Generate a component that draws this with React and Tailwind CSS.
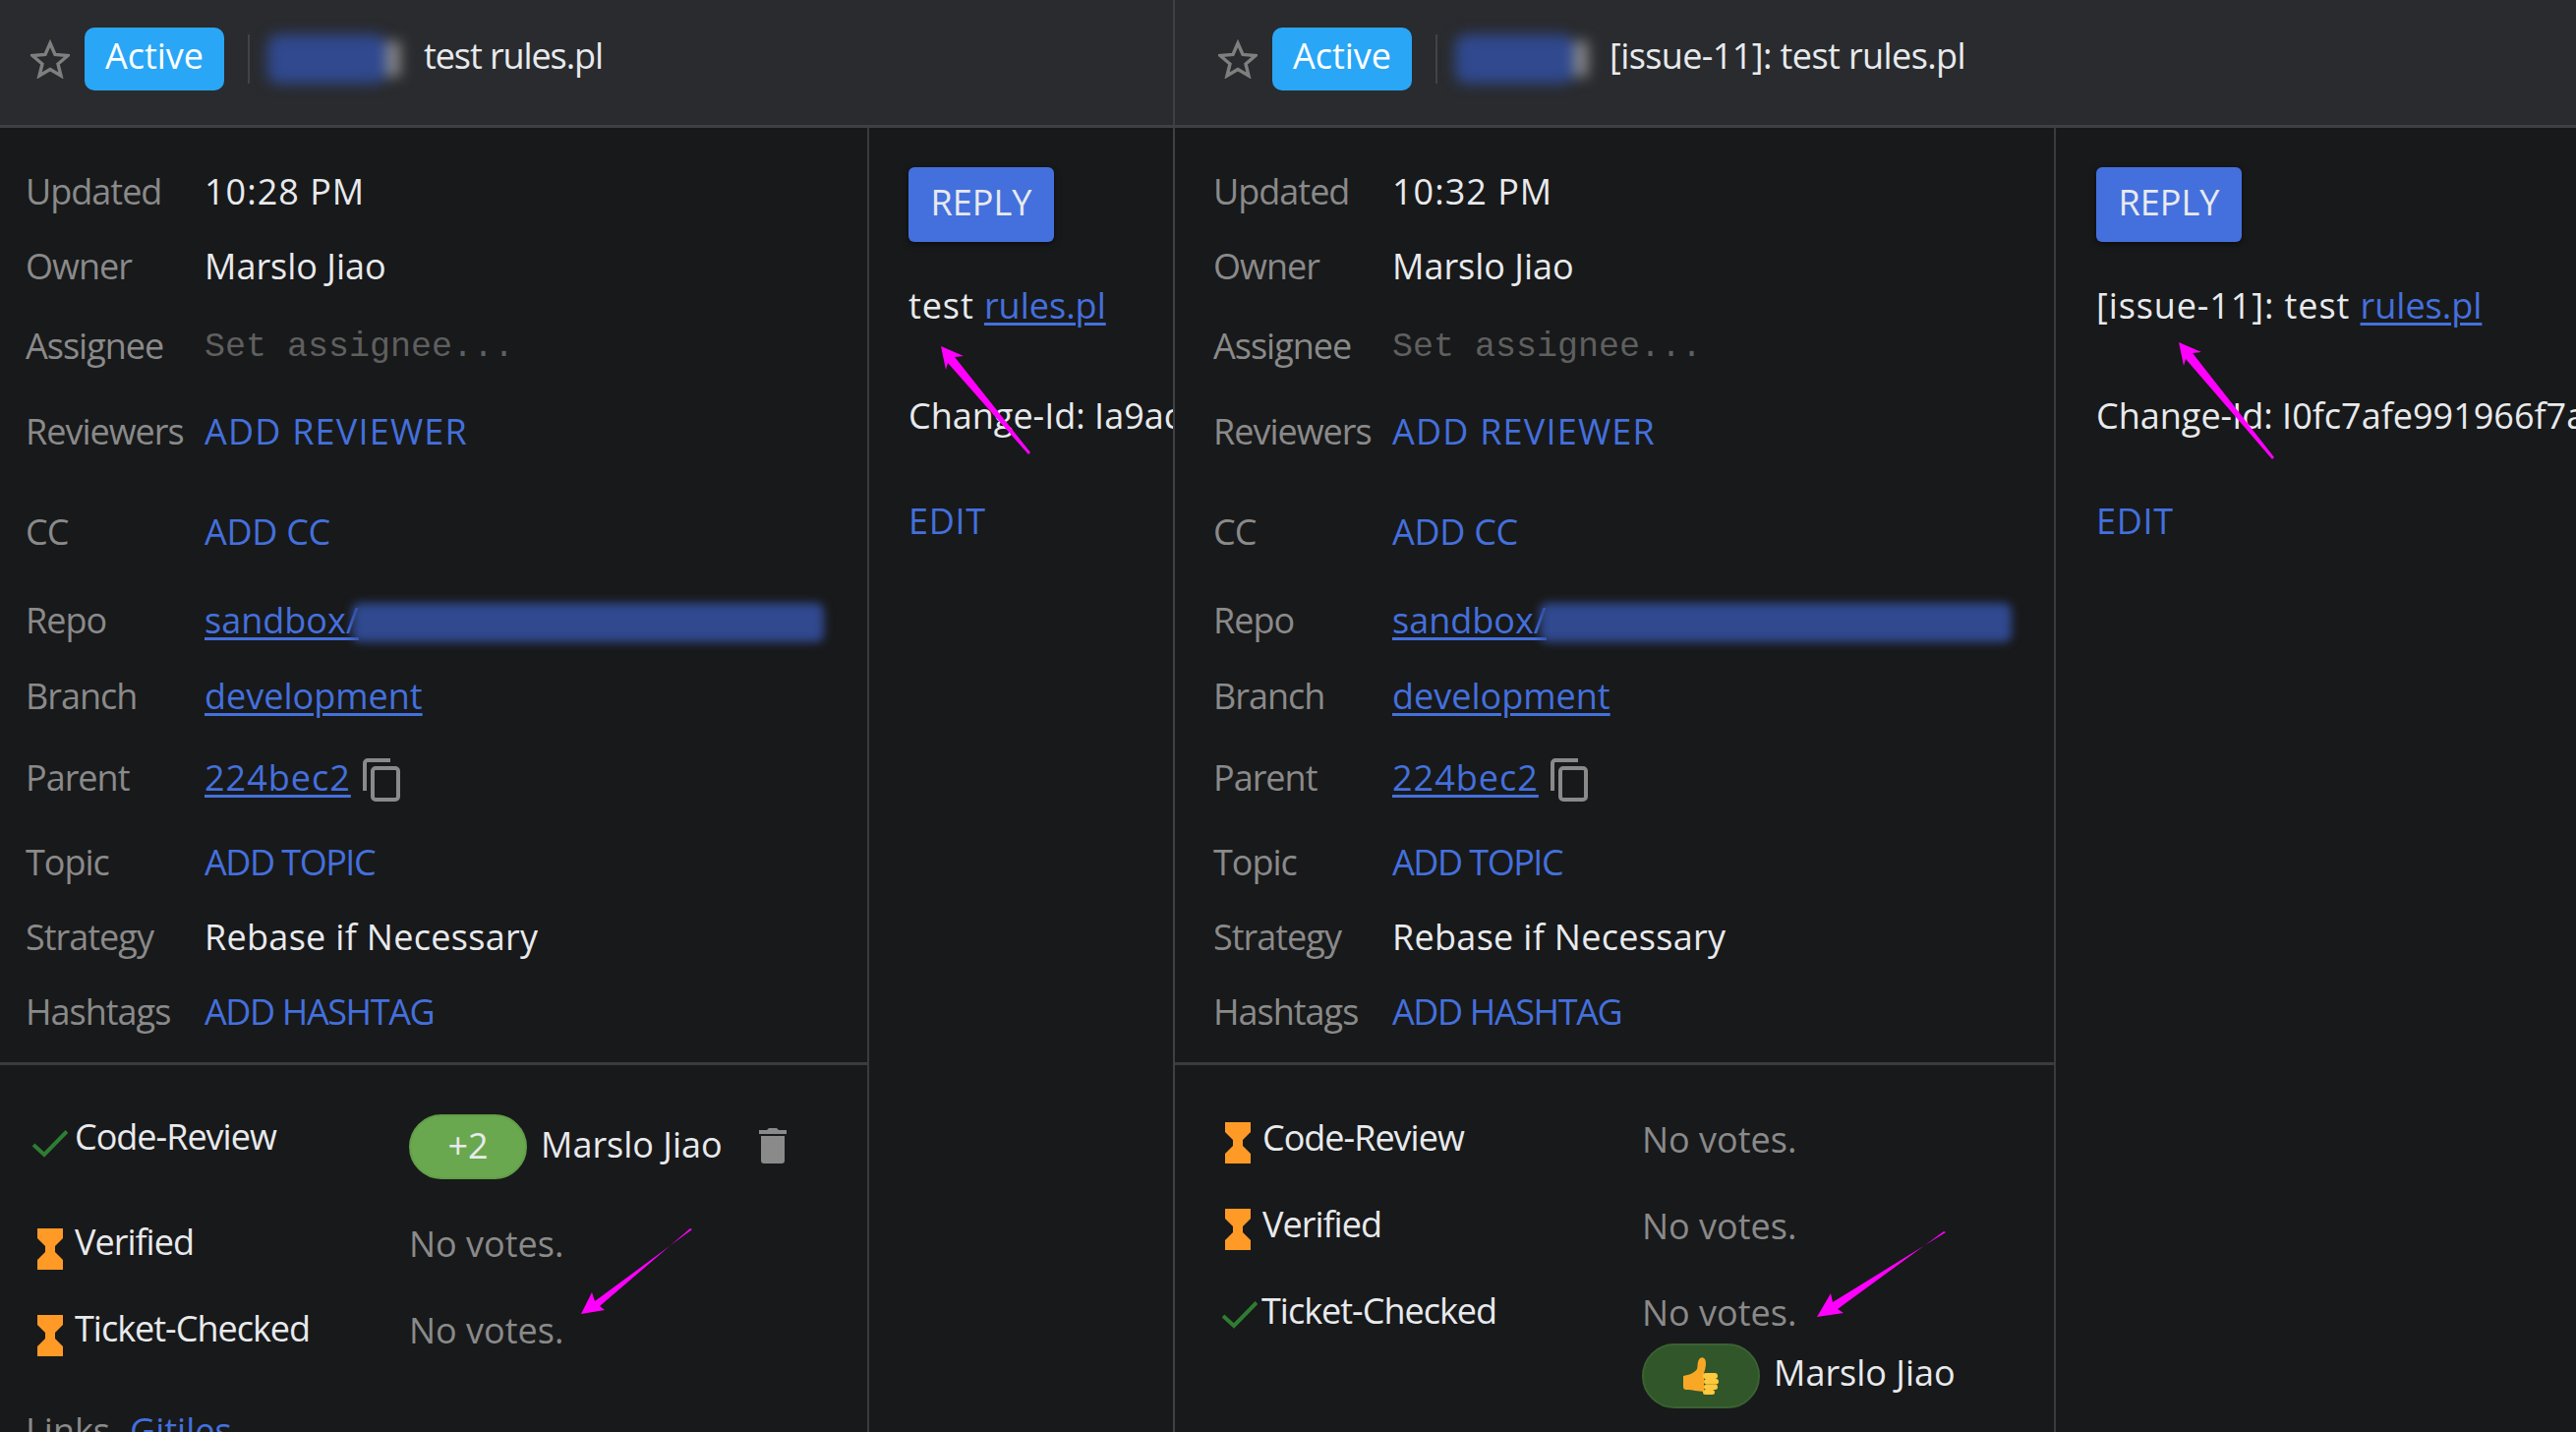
function Star() {
  return (
    <svg viewBox="0 0 40 40" className="w-[40px] h-[40px] shrink-0" fill="none" stroke="#7f7f7f" strokeWidth="3.4">
      <polygon points="20,4 25,15.5 38,16.5 28,25 31,37 20,30.5 9,37 12,25 2,16.5 15,15.5" />
    </svg>
  );
}

function Hourglass() {
  return (
    <svg viewBox="0 0 26 42" className="w-[26px] h-[42px] shrink-0">
      <polygon fill="#ff9a26" points="0,0 26,0 26,10 18,18 18,24 26,32 26,42 0,42 0,32 8,24 8,18 0,10" />
    </svg>
  );
}

function Check() {
  return (
    <svg viewBox="0 0 36 28" className="w-[36px] h-[28px] shrink-0" fill="none" stroke="#2e7d32" strokeWidth="4">
      <polyline points="1,15 12,25 35,1.5" />
    </svg>
  );
}

function Trash() {
  return (
    <svg viewBox="0 0 28 36" className="w-[28px] h-[36px]" fill="#8a8a8a">
      <path d="M8 2l2-2h8l2 2h8v4H0V2z" />
      <path d="M2 8h24v25a3 3 0 0 1-3 3H5a3 3 0 0 1-3-3z" />
    </svg>
  );
}

function Copy() {
  return (
    <svg viewBox="0 0 38 44" className="w-[38px] h-[44px] shrink-0" fill="none" stroke="#8a8a8a" strokeWidth="4">
      <path d="M28 2H5a3 3 0 0 0-3 3v28" />
      <rect x="10" y="10" width="26" height="32" rx="3" />
    </svg>
  );
}

function Thumb() {
  return (
    <svg viewBox="0 0 36 38" className="w-[36px] h-[38px]">
      <path fill="#f9a825" d="M0 19c6-1 11-3 14-7 1-3 0-8 3-11 3-2 6 0 6 5 0 4-1 7-2 10v19l-9-1c-3-1-5-1-9-1a3 3 0 0 1-3-3z" />
      <g fill="#ffc83d">
        <rect x="20" y="16" width="15" height="6" rx="3" />
        <rect x="21" y="22" width="15" height="5.5" rx="2.7" />
        <rect x="21" y="27.5" width="14" height="5.5" rx="2.7" />
        <rect x="20" y="33" width="12" height="5" rx="2.5" />
      </g>
    </svg>
  );
}

function Arrow({ className, points, viewBox }) {
  return (
    <svg viewBox={viewBox} className={className} fill="#ff00ff">
      <polygon points={points} />
    </svg>
  );
}

function Row({ label, h, children }) {
  return (
    <div className={`flex items-center ${h}`}>
      <span className="w-[182px] shrink-0 text-[#8a8a8a] tracking-[-1px]">{label}</span>
      {children}
    </div>
  );
}

function Link({ children, underline, className = "" }) {
  return <span className={`text-[#4470dd] ${underline ? "underline underline-offset-4 decoration-[3px]" : ""} ${className}`}>{children}</span>;
}

function Sidebar({ time, pad }) {
  return (
    <div className={`pt-[27px] pb-[3px] pr-[26px] border-b-[3px] border-[#3a3b3d] ${pad}`}>
      <Row label="Updated" h="h-[76px]"><span className="text-[#e8eaed] tracking-[1px]">{time}</span></Row>
      <Row label="Owner" h="h-[76px]"><span className="text-[#e8eaed]">Marslo Jiao</span></Row>
      <Row label="Assignee" h="h-[86px]">
        <span className="font-['Liberation_Mono',monospace] text-[35px] mt-[2px] text-[#5f5f5f]">Set assignee...</span>
      </Row>
      <Row label="Reviewers" h="h-[88px]"><Link className="tracking-[1.2px]">ADD REVIEWER</Link></Row>
      <Row label="CC" h="h-[116px]"><Link className="tracking-[-0.3px]">ADD CC</Link></Row>
      <Row label="Repo" h="h-[64px]">
        <div className="relative">
          <Link underline>sandbox/</Link>
          <div className="absolute left-[150px] top-[4px] h-[40px] w-[480px] rounded-lg bg-[#30498f] blur-[5px]"></div>
        </div>
      </Row>
      <Row label="Branch" h="h-[90px]"><Link underline>development</Link></Row>
      <Row label="Parent" h="h-[76px]">
        <Link underline className="tracking-[1px]">224bec2</Link>
        <span className="ml-[12px] mt-[4px]"><Copy /></span>
      </Row>
      <Row label="Topic" h="h-[96px]"><Link className="tracking-[-1.5px]">ADD TOPIC</Link></Row>
      <Row label="Strategy" h="h-[56px]"><span className="text-[#e8eaed] tracking-[0.3px]">Rebase if Necessary</span></Row>
      <Row label="Hashtags" h="h-[96px]"><Link className="tracking-[-1.4px]">ADD HASHTAG</Link></Row>
    </div>
  );
}

function Header({ title, blurW, gap, pad, tracking }) {
  return (
    <div className={`h-[130px] shrink-0 bg-[#292b2e] border-b-[3px] border-[#3f4043] flex items-center pb-[7px] ${pad}`}>
      <Star />
      <span className="ml-[15px] h-[64px] w-[142px] rounded-[10px] bg-[#29a6f6] text-white flex items-center justify-center pb-[6px]">Active</span>
      <span className="ml-[24px] h-[50px] w-[2px] bg-[#414346]"></span>
      <div className={`ml-[18px] h-[50px] flex items-center blur-[7px] ${blurW}`}>
        <span className="h-full flex-1 rounded-xl bg-[#30498f]"></span>
        <span className="h-[36px] w-[14px] bg-[#8a8a8a]"></span>
      </div>
      <span className={`-mt-[6px] text-[#e8eaed] ${gap} ${tracking}`}>{title}</span>
    </div>
  );
}

function LeftLabels() {
  return (
    <div className="pl-[30px] pt-[50px] relative">
      <div className="flex h-[86px]">
        <div className="w-[386px] flex items-start pt-[1px]">
          <span className="mt-[15px] ml-[3px]"><Check /></span>
          <span className="text-[#e8eaed] ml-[7px] tracking-[-1px]">Code-Review</span>
        </div>
        <div className="flex items-start">
          <span className="w-[120px] h-[66px] rounded-[33px] border-2 border-[#639e49] bg-[#6aa84f] text-[#e8eaed] flex items-center justify-center pb-[2px]">+2</span>
          <span className="ml-[14px] mt-[9px] text-[#e8eaed]">Marslo Jiao</span>
          <span className="ml-[37px] mt-[14px]"><Trash /></span>
        </div>
      </div>
      <div className="flex h-[88px] pt-[30px]">
        <div className="w-[386px] flex items-start gap-[12px] pl-[8px]">
          <Hourglass />
          <span className="text-[#e8eaed] -mt-[8px] tracking-[-1px]">Verified</span>
        </div>
        <span className="text-[#8a8a8a] -mt-[6px]">No votes.</span>
      </div>
      <div className="flex h-[88px] pt-[30px]">
        <div className="w-[386px] flex items-start gap-[12px] pl-[8px]">
          <Hourglass />
          <span className="text-[#e8eaed] -mt-[8px] tracking-[-1px]">Ticket-Checked</span>
        </div>
        <span className="text-[#8a8a8a] -mt-[6px]">No votes.</span>
      </div>
      <div className="mt-[38px] -ml-[4px] flex">
        <span className="text-[#8a8a8a] w-[106px]">Links</span>
        <Link>Gitiles</Link>
      </div>
    </div>
  );
}

function RightLabels() {
  return (
    <div className="pl-[43px] pt-[58px]">
      <div className="flex h-[88px]">
        <div className="w-[432px] flex items-start gap-[12px] pl-[8px]">
          <Hourglass />
          <span className="text-[#e8eaed] -mt-[6px] tracking-[-1px]">Code-Review</span>
        </div>
        <span className="text-[#8a8a8a] -mt-[4px]">No votes.</span>
      </div>
      <div className="flex h-[88px]">
        <div className="w-[432px] flex items-start gap-[12px] pl-[8px]">
          <Hourglass />
          <span className="text-[#e8eaed] -mt-[6px] tracking-[-1px]">Verified</span>
        </div>
        <span className="text-[#8a8a8a] -mt-[4px]">No votes.</span>
      </div>
      <div className="flex">
        <div className="w-[432px] flex items-start -mt-[6px]">
          <span className="mt-[12px] ml-[5px]"><Check /></span>
          <span className="text-[#e8eaed] ml-[4px] tracking-[-1px]">Ticket-Checked</span>
        </div>
        <div className="flex flex-col -mt-[4px]">
          <span className="text-[#8a8a8a]">No votes.</span>
          <div className="flex items-center mt-[9px]">
            <span className="w-[120px] h-[66px] rounded-[33px] border-2 border-[#3a6232] bg-[#30562a] flex items-center justify-center"><Thumb /></span>
            <span className="ml-[14px] -mt-[6px] text-[#e8eaed]">Marslo Jiao</span>
          </div>
        </div>
      </div>
    </div>
  );
}

function Message({ lead, changeId, pad }) {
  return (
    <div className={`flex-1 min-w-0 overflow-hidden pt-[40px] ${pad}`}>
      <span className="flex w-[148px] h-[76px] rounded-[6px] bg-[#4470dd] text-[#e8eaed] items-center justify-center shadow-[0_2px_6px_rgba(0,0,0,0.5)] pb-[4px]">REPLY</span>
      <div className="mt-[43px] h-[44px] flex items-center whitespace-pre text-[#e8eaed]">
        <span className="tracking-[0.9px]">{lead} </span><Link underline>rules.pl</Link>
      </div>
      <div className="mt-[68px] h-[44px] flex items-center whitespace-nowrap text-[#e8eaed]">{changeId}</div>
      <div className="mt-[63px] h-[44px] flex items-center"><Link className="tracking-[0.7px]">EDIT</Link></div>
    </div>
  );
}

export default function App() {
  return (
    <div className="font-['Open_Sans',sans-serif] flex w-[2620px] h-[1456px] overflow-hidden bg-[#18191a] text-[36px] leading-[44px]">
      <div className="relative w-[1195px] shrink-0 h-full flex flex-col overflow-hidden border-r-[2px] border-[#3f4043]">
        <Header title="test rules.pl" blurW="w-[135px]" gap="ml-[24px]" pad="pl-[31px]" tracking="tracking-[-1.1px]" />
        <div className="flex flex-1 min-h-0">
          <div className="w-[884px] shrink-0 border-r-[2px] border-[#3a3b3d]">
            <Sidebar time="10:28 PM" pad="pl-[26px]" />
            <LeftLabels />
          </div>
          <Message lead="test" changeId="Change-Id: Ia9ac" pad="pl-[40px]" />
        </div>
        <Arrow className="absolute left-[950px] top-[345px] w-[105px] h-[125px]" viewBox="950 345 105 125" points="957,352 980,362 971,363 1048,460 1046,462 964,369 962,376" />
        <Arrow className="absolute left-[585px] top-[1245px] w-[125px] h-[100px]" viewBox="585 1245 125 100" points="591,1336 602,1314 605,1323 704,1250 702,1249 610,1328 615,1332" />
      </div>
      <div className="relative flex-1 h-full flex flex-col overflow-hidden">
        <Header title="[issue-11]: test rules.pl" blurW="w-[135px]" gap="ml-[22px]" pad="pl-[44px]" tracking="tracking-[-0.6px]" />
        <div className="flex flex-1 min-h-0">
          <div className="w-[896px] shrink-0 border-r-[2px] border-[#3a3b3d]">
            <Sidebar time="10:32 PM" pad="pl-[39px]" />
            <RightLabels />
          </div>
          <Message lead="[issue-11]: test" changeId="Change-Id: I0fc7afe991966f7a2" pad="pl-[41px]" />
        </div>
        <Arrow className="absolute left-[1014px] top-[342px] w-[110px] h-[130px]" viewBox="2211 342 110 130" points="2218,348 2241,358 2232,359 2315,465 2313,467 2225,365 2223,372" />
        <Arrow className="absolute left-[647px] top-[1248px] w-[140px] h-[100px]" viewBox="1844 1248 140 100" points="1850,1339 1864,1315 1866,1324 1981,1253 1979,1252 1871,1331 1877,1335" />
      </div>
    </div>
  );
}
